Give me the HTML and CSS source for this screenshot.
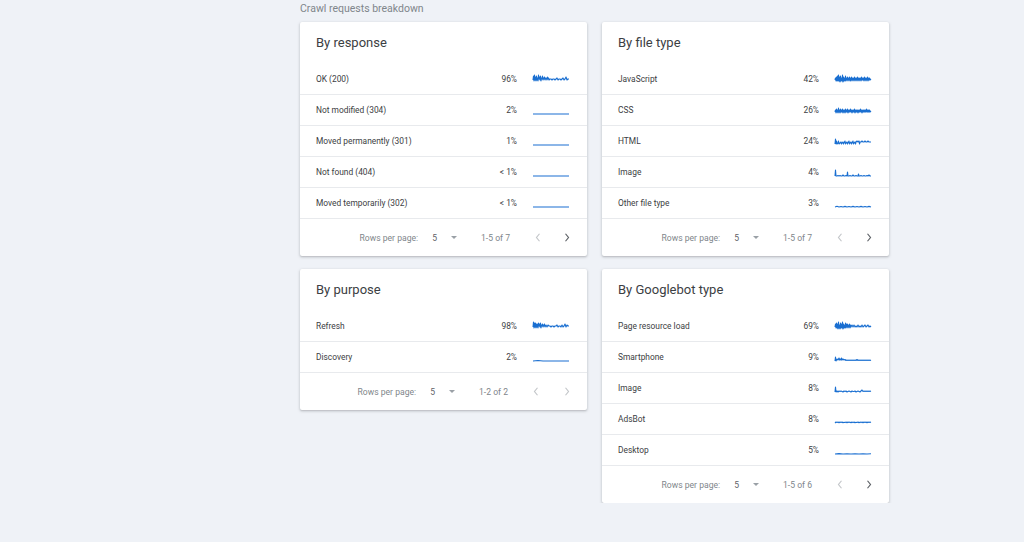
FILE: index.html
```html
<!DOCTYPE html>
<html>
<head>
<meta charset="utf-8">
<link rel="stylesheet" href="styles.css">
</head>
<body>
<main class="page">
  <div class="section-title">Crawl requests breakdown</div>
  <div class="grid">
    <div class="col">
      <section class="card">
        <h2 class="card-title">By response</h2>
        <div class="row"><span class="label">OK (200)</span><span class="pct">96%</span>
          <svg class="spark" viewBox="0 0 36 12"><polyline points="0,7 0.5,3 1,8 1.5,2 2,7 2.5,4 3,8 3.5,3 4,7 4.5,5 5,8 5.5,2 6,6 6.5,4 7,7 7.5,3 8,8 8.5,5 9,6 9.5,3 10,7 10.5,5 11,6 11.5,4 12,7 12.5,5 13,6 13.5,5 14,7 14.5,4 15,6 15.5,5 16,7 17,6 18,6 19,7 20,6 21,6 22,7 23,6 24,5 25,7 26,6 27,6 28,7 29,6 30,5 31,7 32,6 33,4 34,7 35,6 36,6"/></svg></div>
        <div class="row"><span class="label">Not modified (304)</span><span class="pct">2%</span>
          <svg class="spark" viewBox="0 0 36 12"><polyline points="0,10 36,10"/></svg></div>
        <div class="row"><span class="label">Moved permanently (301)</span><span class="pct">1%</span>
          <svg class="spark" viewBox="0 0 36 12"><polyline points="0,10 36,10"/></svg></div>
        <div class="row"><span class="label">Not found (404)</span><span class="pct">&lt; 1%</span>
          <svg class="spark" viewBox="0 0 36 12"><polyline points="0,10 36,10"/></svg></div>
        <div class="row"><span class="label">Moved temporarily (302)</span><span class="pct">&lt; 1%</span>
          <svg class="spark" viewBox="0 0 36 12"><polyline points="0,10 36,10"/></svg></div>
        <div class="footer">
          <span class="rpp">Rows per page:</span><span class="num">5</span>
          <svg class="drop" viewBox="0 0 8 4"><polygon points="0,0 8,0 4,4"/></svg>
          <span class="range">1-5 of 7</span>
          <svg class="chev off" viewBox="0 0 8 12"><polyline points="6,1 2,6 6,11"/></svg>
          <svg class="chev" viewBox="0 0 8 12"><polyline points="2,1 6,6 2,11"/></svg>
        </div>
      </section>
      <section class="card">
        <h2 class="card-title">By purpose</h2>
        <div class="row"><span class="label">Refresh</span><span class="pct">98%</span>
          <svg class="spark" viewBox="0 0 36 12"><polyline points="0,7 0.5,2 1,8 1.5,3 2,7 2.5,3 3,8 3.5,4 4,7 4.5,4 5,8 5.5,3 6,6 6.5,4 7,7 7.5,3 8,8 8.5,5 9,6 9.5,4 10,7 10.5,5 11,6 11.5,4 12,7 13,5 14,7 15,5 16,6 17,6 18,7 19,6 20,6 21,7 22,6 23,6 24,5 25,7 26,6 27,6 28,7 29,5 30,7 31,6 32,4 33,7 34,5 35,6 36,6"/></svg></div>
        <div class="row"><span class="label">Discovery</span><span class="pct">2%</span>
          <svg class="spark" viewBox="0 0 36 12"><polyline points="0,10 5,9.5 10,10 20,10 36,10"/></svg></div>
        <div class="footer">
          <span class="rpp">Rows per page:</span><span class="num">5</span>
          <svg class="drop" viewBox="0 0 8 4"><polygon points="0,0 8,0 4,4"/></svg>
          <span class="range">1-2 of 2</span>
          <svg class="chev off" viewBox="0 0 8 12"><polyline points="6,1 2,6 6,11"/></svg>
          <svg class="chev off" viewBox="0 0 8 12"><polyline points="2,1 6,6 2,11"/></svg>
        </div>
      </section>
    </div>
    <div class="col">
      <section class="card">
        <h2 class="card-title">By file type</h2>
        <div class="row"><span class="label">JavaScript</span><span class="pct">42%</span>
          <svg class="spark" viewBox="0 0 36 12"><polyline points="0,7 0.5,5 1,8 1.5,4 2,8 2.5,3 3,8 3.5,2 4,8 4.5,4 5,9 5.5,3 6,8 6.5,5 7,8 7.5,2 8,9 8.5,4 9,8 9.5,5 10,8 10.5,3 11,8 11.5,5 12,7 12.5,4 13,8 13.5,5 14,7 14.5,4 15,8 15.5,5 16,8 16.5,4 17,7 17.5,5 18,8 18.5,5 19,7 19.5,4 20,8 20.5,5 21,7 21.5,5 22,8 22.5,4 23,7 23.5,5 24,8 24.5,5 25,7 25.5,5 26,8 26.5,4 27,7 27.5,5 28,7 28.5,5 29,8 29.5,4 30,7 30.5,5 31,8 31.5,5 32,7 32.5,4 33,8 33.5,5 34,7 34.5,5 35,7 36,6"/></svg></div>
        <div class="row"><span class="label">CSS</span><span class="pct">26%</span>
          <svg class="spark" viewBox="0 0 36 12"><polyline points="0,8 0.5,6 1,9 1.5,5 2,8 2.5,6 3,9 3.5,4 4,8 4.5,6 5,9 5.5,5 6,8 6.5,6 7,8 7.5,5 8,9 8.5,6 9,8 9.5,6 10,9 10.5,5 11,8 11.5,6 12,8 12.5,5 13,9 13.5,6 14,8 14.5,6 15,8 15.5,5 16,8 16.5,6 17,9 17.5,6 18,8 18.5,6 19,8 19.5,5 20,9 20.5,6 21,8 21.5,6 22,8 22.5,6 23,9 23.5,6 24,8 24.5,6 25,8 25.5,5 26,8 26.5,6 27,9 27.5,6 28,8 28.5,6 29,8 29.5,6 30,8 30.5,6 31,8 31.5,5 32,8 32.5,6 33,8 33.5,6 34,8 34.5,6 35,8 36,7"/></svg></div>
        <div class="row"><span class="label">HTML</span><span class="pct">24%</span>
          <svg class="spark" viewBox="0 0 36 12"><polyline points="0,9 0.5,4 1,9 1.5,6 2,9 3,8 3.5,6 4,9 5,8 6,7 6.5,9 7,8 8,7 8.5,9 9,8 10,6 10.5,9 11,8 12,7 12.5,9 13,8 14,6 14.5,9 15,8 16,7 16.5,9 17,8 18,6 18.5,9 19,8 20,7 20.5,9 21,7 22,6 23,7 24,6 24.5,9 25,7 26,7 27,6 28,7 29,7 30,6 31,7 32,7 33,6 34,7 35,7 36,7"/></svg></div>
        <div class="row"><span class="label">Image</span><span class="pct">4%</span>
          <svg class="spark" viewBox="0 0 36 12"><polyline points="0,10 0.5,4 1,10 2,10 3,9.5 4,10 5,9.5 6,10 7,10 8,9 9,10 10,10 11,9.5 12,10 12.5,6 13,10 14,10 15,9.5 16,10 17,10 18,9 19,10 20,10 21,9.5 22,10 23,10 23.5,8 24,10 25,10 26,9.5 27,10 28,10 29,9.5 30,10 31,10 32,9.5 33,10 34,9 35,10 36,10"/></svg></div>
        <div class="row"><span class="label">Other file type</span><span class="pct">3%</span>
          <svg class="spark" viewBox="0 0 36 12"><polyline points="0,10 2,9.3 4,10 6,9.5 8,10 10,9.4 12,10 14,9.5 16,10 18,9.4 20,10 22,9.5 24,10 26,9.4 28,10 30,9.5 32,10 34,9.4 36,10"/></svg></div>
        <div class="footer">
          <span class="rpp">Rows per page:</span><span class="num">5</span>
          <svg class="drop" viewBox="0 0 8 4"><polygon points="0,0 8,0 4,4"/></svg>
          <span class="range">1-5 of 7</span>
          <svg class="chev off" viewBox="0 0 8 12"><polyline points="6,1 2,6 6,11"/></svg>
          <svg class="chev" viewBox="0 0 8 12"><polyline points="2,1 6,6 2,11"/></svg>
        </div>
      </section>
      <section class="card">
        <h2 class="card-title">By Googlebot type</h2>
        <div class="row"><span class="label">Page resource load</span><span class="pct">69%</span>
          <svg class="spark" viewBox="0 0 36 12"><polyline points="0,7 0.5,4 1,8 1.5,3 2,8 2.5,4 3,9 3.5,2 4,8 4.5,5 5,9 5.5,3 6,8 6.5,4 7,8 7.5,2 8,9 8.5,4 9,8 9.5,5 10,8 10.5,3 11,8 11.5,4 12,7 12.5,4 13,8 13.5,5 14,7 14.5,4 15,8 15.5,5 16,7 17,5 18,7 19,5 20,7 21,6 22,7 23,5 24,7 25,6 26,7 27,5 28,7 29,6 30,5 31,7 32,6 33,5 34,7 35,6 36,7"/></svg></div>
        <div class="row"><span class="label">Smartphone</span><span class="pct">9%</span>
          <svg class="spark" viewBox="0 0 36 12"><polyline points="0,10 0.5,6 1,10 2,8 3,9 4,7 4.5,9 5,8 6,9 6.5,7 7,9 8,8 9,9 10,8.5 11,9.5 12,9 13,9.5 14,9 15,9.5 16,9 17,9.5 18,9 19,9.5 20,9 21,9.5 22,8.5 23,9.5 24,9 25,9.5 26,9 27,9.5 28,9 29,9.5 30,9 31,9.5 32,9 33,9.5 34,9 35,9.5 36,9"/></svg></div>
        <div class="row"><span class="label">Image</span><span class="pct">8%</span>
          <svg class="spark" viewBox="0 0 36 12"><polyline points="0,10 0.5,5 1,10 2,9 3,10 4,9 5,9.5 6,9 7,9.5 8,10 9,9 10,9.5 11,9 12,10 13,9.5 14,9 15,9.5 16,10 17,9 18,9.5 19,9.5 20,9 21,10 22,9.5 23,9 24,9.5 25,10 26,9 27,8 28,9.5 29,9 30,9.5 31,9 32,9.5 33,9 34,9.5 35,9 36,9.5"/></svg></div>
        <div class="row"><span class="label">AdsBot</span><span class="pct">8%</span>
          <svg class="spark" viewBox="0 0 36 12"><polyline points="0,10 1,9 2,9.5 3,9 4,9.8 5,9 6,9.5 7,9 8,9.8 9,9.2 10,9.6 11,9 12,9.8 13,9 14,9.5 15,9.1 16,9.8 17,9 18,9.6 19,9 20,9.8 21,9.2 22,9.5 23,9 24,9.8 25,9.1 26,9.6 27,9 28,9.8 29,9 30,9.5 31,9 32,9.8 33,9 34,9.5 35,9.1 36,9.6"/></svg></div>
        <div class="row"><span class="label">Desktop</span><span class="pct">5%</span>
          <svg class="spark" viewBox="0 0 36 12"><polyline points="0,10 4,9.6 8,10 12,9.7 16,10 20,9.7 24,10 28,9.7 32,10 36,9.8"/></svg></div>
        <div class="footer">
          <span class="rpp">Rows per page:</span><span class="num">5</span>
          <svg class="drop" viewBox="0 0 8 4"><polygon points="0,0 8,0 4,4"/></svg>
          <span class="range">1-5 of 6</span>
          <svg class="chev off" viewBox="0 0 8 12"><polyline points="6,1 2,6 6,11"/></svg>
          <svg class="chev" viewBox="0 0 8 12"><polyline points="2,1 6,6 2,11"/></svg>
        </div>
      </section>
    </div>
  </div>
</main>
</body>
</html>
```
FILE: styles.css
```css
html, body {
  margin: 0;
  padding: 0;
  background: #eff2f7;
  font-family: Roboto, "Liberation Sans", Arial, sans-serif;
  color: #3c4043;
}
.page {
  padding: 2px 0 0 300px;
}
.section-title {
  font-size: 10.5px;
  color: #80868b;
  line-height: 14px;
  height: 20px;
}
.grid {
  display: flex;
  gap: 15px;
  align-items: flex-start;
}
.col {
  display: flex;
  flex-direction: column;
  gap: 13px;
  width: 287px;
}
.card {
  background: #fff;
  border-radius: 2px;
  box-shadow: 0 1px 2px rgba(60,64,67,0.25), 0 1px 3px 1px rgba(60,64,67,0.08);
}
.card-title {
  margin: 0;
  font-weight: 400;
  font-size: 13px;
  line-height: 16px;
  padding: 13px 16px 13px;
  color: #3c4043;
}
.row {
  display: flex;
  align-items: center;
  height: 31px;
  padding: 0 18px 0 16px;
  border-bottom: 1px solid #e8eaed;
  font-size: 8.4px;
  box-sizing: border-box;
}
.label {
  flex: 1;
}
.pct {
  width: 40px;
  text-align: right;
}
.spark {
  width: 36px;
  height: 12px;
  margin-left: 16px;
  overflow: visible;
}
.spark polyline {
  fill: none;
  stroke: #1a6fd1;
  stroke-width: 1.1;
  stroke-linejoin: round;
}
.footer {
  display: flex;
  align-items: center;
  justify-content: flex-end;
  height: 37px;
  padding-right: 17px;
  font-size: 8.6px;
  color: #80868b;
}
.num {
  margin-left: 14px;
  color: #5f6368;
}
.drop {
  width: 6px;
  height: 3px;
  margin-left: 14px;
  fill: #9aa0a6;
}
.range {
  margin-left: 24px;
  color: #80868b;
}
.chev {
  width: 6px;
  height: 9px;
  fill: none;
  stroke: #5f6368;
  stroke-width: 1.6;
  margin-left: 23px;
}
.chev.off {
  stroke: #c4c7ca;
  margin-left: 25px;
}
```
